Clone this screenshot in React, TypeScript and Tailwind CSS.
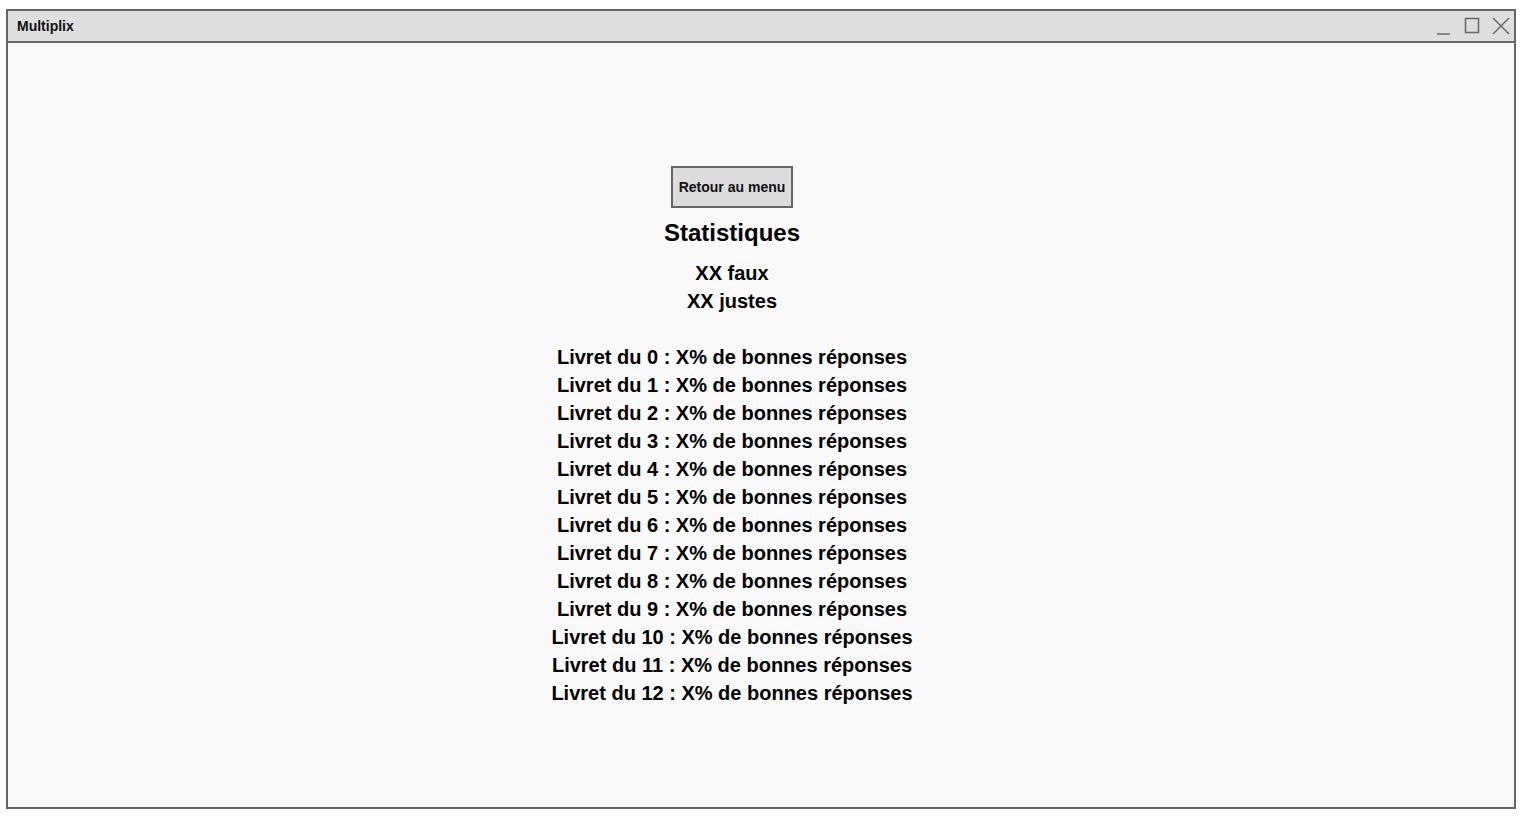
import React from "react"

const livrets = Array.from({ length: 13 }, (_, i) => i)

function WindowControls() {
  return (
    <div className="flex items-center gap-[12px] pr-[4px] text-[#666]">
      <svg width="16" height="18" viewBox="0 0 16 18" className="mt-[2px]">
        <line x1="1" y1="16" x2="14" y2="16" stroke="currentColor" strokeWidth="1.5" />
      </svg>
      <svg width="16" height="18" viewBox="0 0 16 18">
        <rect x="1.5" y="1.5" width="13" height="14" fill="none" stroke="currentColor" strokeWidth="1.5" />
      </svg>
      <svg width="18" height="18" viewBox="0 0 18 18">
        <line x1="1" y1="1" x2="17" y2="17" stroke="currentColor" strokeWidth="1.5" />
        <line x1="17" y1="1" x2="1" y2="17" stroke="currentColor" strokeWidth="1.5" />
      </svg>
    </div>
  )
}

export default function App() {
  return (
    <div
      className="min-h-[820px] w-full bg-white pl-[6px] pt-[9px]"
      style={{ fontFamily: '"Liberation Sans", Arial, sans-serif' }}
    >
      <div className="flex h-[800px] w-[1510px] flex-col border-2 border-[#666] bg-[#f9f9f9]">
        <div className="flex h-[32px] shrink-0 items-center justify-between border-b-2 border-[#666] bg-[#dedede] pl-[9px]">
          <span className="text-[14px] font-bold text-[#111]">Multiplix</span>
          <WindowControls />
        </div>

        <div className="flex flex-col items-center pr-[58px] pt-[123px] text-black">
          <button className="h-[42px] w-[122px] border-2 border-[#666] bg-[#dcdcdc] text-[14px] font-bold text-[#111]">
            Retour au menu
          </button>

          <h1 className="mt-[11px] text-[24px] font-bold leading-[28px]">Statistiques</h1>

          <div className="mt-[12px] flex flex-col items-center text-[20px] font-bold leading-[28px]">
            <p>XX faux</p>
            <p>XX justes</p>
            <p className="h-[28px]" />
            {livrets.map((n) => (
              <p key={n}>Livret du {n} : X% de bonnes réponses</p>
            ))}
          </div>
        </div>
      </div>
    </div>
  )
}
